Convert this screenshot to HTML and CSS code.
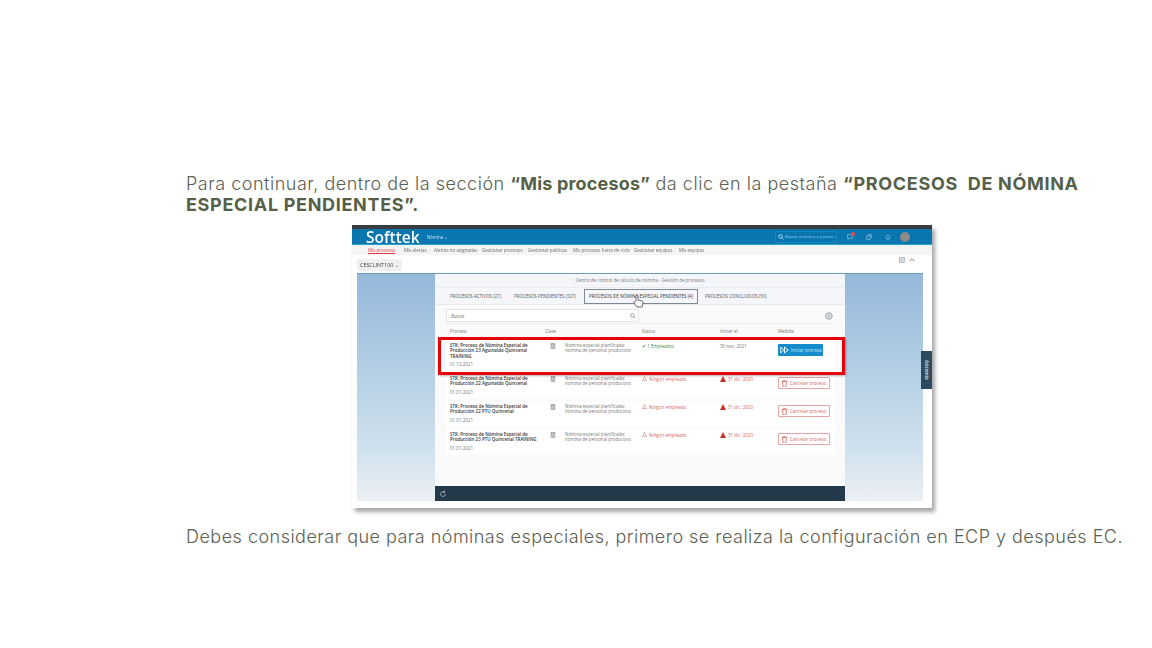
FILE: index.html
```html
<!DOCTYPE html>
<html lang="en">
<head>
    <meta charset="UTF-8">
    <meta name="viewport" content="width=device-width, initial-scale=1.0">
    <title>Mis procesos</title>
    <link rel="stylesheet" href="styles.css">
</head>
<body>

    <p class="intro">Para continuar, dentro de la sección <b class="term">“Mis procesos”</b> da clic en la pestaña <b>“PROCESOS &nbsp;DE NÓMINA ESPECIAL PENDIENTES”.</b></p>

    <div class="shot">
        <div class="topline"></div>
        <div class="shell">
            <span class="logo">Softtek</span>
            <span class="module">Nómina ⌄</span>
            <span class="search">
                <svg viewBox="0 0 10 10" width="6" height="6"><circle cx="4" cy="4" r="3" fill="none" stroke="#bfe6ff" stroke-width="1.4"/><path d="M6 6l3 3" stroke="#bfe6ff" stroke-width="1.4"/></svg>
                Buscar acciones o person...
            </span>
            <span class="shell-icon first-icon">
                <svg viewBox="0 0 10 10" width="6" height="6"><path d="M1 1h8v6H4L2 9V7H1z" fill="none" stroke="#9fd0ec"/></svg>
                <span class="badge"></span>
            </span>
            <svg class="shell-icon" viewBox="0 0 10 10" width="6" height="6"><path d="M1 3h6v6H1zM4 3V1h5v5H7" fill="none" stroke="#9fd0ec"/></svg>
            <svg class="shell-icon" viewBox="0 0 10 10" width="6" height="6"><path d="M2 8V5a3 3 0 0 1 6 0v3zM4 9h2" fill="none" stroke="#9fd0ec"/></svg>
            <span class="avatar"></span>
        </div>

        <div class="nav">
            <span class="nav-item current">Mis procesos</span>
            <span class="nav-item">Mis alertas</span>
            <span class="nav-item">Alertas no asignadas</span>
            <span class="nav-item">Gestionar procesos</span>
            <span class="nav-item">Gestionar políticas</span>
            <span class="nav-item">Mis procesos fuera de ciclo</span>
            <span class="nav-item">Gestionar equipos</span>
            <span class="nav-item">Mis equipos</span>
        </div>

        <div class="toolbar">
            <span class="client">CESCLINT100 ⌄</span>
            <span class="tool-icons">
                <svg viewBox="0 0 10 10" width="6" height="6"><rect x="1" y="1" width="8" height="8" fill="#d5d8dc" stroke="#9aa1a8"/></svg>
                <svg viewBox="0 0 10 10" width="6" height="6"><path d="M1 7l4-4 4 4" fill="none" stroke="#69717a" stroke-width="1.4"/></svg>
            </span>
        </div>

        <div class="stage">
            <div class="panel">
                <div class="panel-title">Centro de control de cálculo de nómina - Gestión de procesos</div>
                <div class="tabs">
                    <span class="tab tab-a">PROCESOS ACTIVOS (27)</span>
                    <span class="tab tab-b">PROCESOS PENDIENTES (327)</span>
                    <span class="tab tab-current">PROCESOS DE NÓMINA ESPECIAL PENDIENTES (4)</span>
                    <span class="tab tab-d">PROCESOS CONCLUIDOS (30)</span>
                </div>
                <div class="panel-body">
                    <div class="filter">
                        <div class="search-box">
                            <span>Buscar</span>
                            <svg viewBox="0 0 10 10" width="6" height="6"><circle cx="4" cy="4" r="3" fill="none" stroke="#7b8288" stroke-width="1.2"/><path d="M6 6l3 3" stroke="#7b8288" stroke-width="1.2"/></svg>
                        </div>
                        <svg class="gear" viewBox="0 0 10 10" width="8" height="8"><circle cx="5" cy="5" r="4" fill="none" stroke="#7b8288"/><circle cx="5" cy="5" r="1.6" fill="none" stroke="#7b8288" stroke-width=".8"/></svg>
                    </div>

                    <div class="row head">
                        <span>Proceso</span>
                        <span>Clase</span>
                        <span></span>
                        <span>Status</span>
                        <span>Iniciar el</span>
                        <span>Medida</span>
                    </div>

                    <div class="row first">
                        <div class="name"><b>STK: Proceso de Nómina Especial de Producción 23 Aguinaldo Quincenal TRAINING</b><span class="date">01.12.2021</span></div>
                        <svg class="doc" viewBox="0 0 10 10" width="6" height="6"><path d="M2 1h6v8H2zM2 3h6M3.5 5h3M3.5 7h3" fill="none" stroke="#666"/></svg>
                        <span class="desc">Nómina especial planificada: nómina de personal productivo</span>
                        <span class="ok">✔ 1 Empleados</span>
                        <span class="when">30 nov. 2021</span>
                        <span class="btn-start">
                            <svg viewBox="0 0 12 10" width="9" height="8"><path d="M1 1l4 4-4 4zM6 1l5 4-5 4z" fill="none" stroke="#fff" stroke-width="1.2"/></svg>
                            Iniciar proceso
                        </span>
                    </div>

                    <div class="row">
                        <div class="name"><b>STK: Proceso de Nómina Especial de Producción 22 Aguinaldo Quincenal</b><span class="date">01.01.2021</span></div>
                        <svg class="doc" viewBox="0 0 10 10" width="6" height="6"><path d="M2 1h6v8H2zM2 3h6M3.5 5h3M3.5 7h3" fill="none" stroke="#666"/></svg>
                        <span class="desc">Nómina especial planificada: nómina de personal productivo</span>
                        <span class="bad"><svg viewBox="0 0 10 10" width="5" height="5"><path d="M5 1l4 8H1z" fill="none" stroke="#d9534f"/></svg> Ningún empleado</span>
                        <span class="bad"><svg viewBox="0 0 10 10" width="6" height="6"><path d="M5 0l5 10H0z" fill="#c9302c"/></svg> 31 dic. 2020</span>
                        <span class="btn-cancel">
                            <svg viewBox="0 0 10 10" width="7" height="7"><path d="M1 2h8M3 2l.5-1h3L7 2M2 2l1 8h4l1-8" fill="none" stroke="#d9534f"/></svg>
                            Cancelar proceso
                        </span>
                    </div>

                    <div class="row">
                        <div class="name"><b>STK: Proceso de Nómina Especial de Producción 22 PTU Quincenal</b><span class="date">01.01.2021</span></div>
                        <svg class="doc" viewBox="0 0 10 10" width="6" height="6"><path d="M2 1h6v8H2zM2 3h6M3.5 5h3M3.5 7h3" fill="none" stroke="#666"/></svg>
                        <span class="desc">Nómina especial planificada: nómina de personal productivo</span>
                        <span class="bad"><svg viewBox="0 0 10 10" width="5" height="5"><path d="M5 1l4 8H1z" fill="none" stroke="#d9534f"/></svg> Ningún empleado</span>
                        <span class="bad"><svg viewBox="0 0 10 10" width="6" height="6"><path d="M5 0l5 10H0z" fill="#c9302c"/></svg> 31 dic. 2020</span>
                        <span class="btn-cancel">
                            <svg viewBox="0 0 10 10" width="7" height="7"><path d="M1 2h8M3 2l.5-1h3L7 2M2 2l1 8h4l1-8" fill="none" stroke="#d9534f"/></svg>
                            Cancelar proceso
                        </span>
                    </div>

                    <div class="row">
                        <div class="name"><b>STK: Proceso de Nómina Especial de Producción 23 PTU Quincenal TRAINING</b><span class="date">01.01.2021</span></div>
                        <svg class="doc" viewBox="0 0 10 10" width="6" height="6"><path d="M2 1h6v8H2zM2 3h6M3.5 5h3M3.5 7h3" fill="none" stroke="#666"/></svg>
                        <span class="desc">Nómina especial planificada: nómina de personal productivo</span>
                        <span class="bad"><svg viewBox="0 0 10 10" width="5" height="5"><path d="M5 1l4 8H1z" fill="none" stroke="#d9534f"/></svg> Ningún empleado</span>
                        <span class="bad"><svg viewBox="0 0 10 10" width="6" height="6"><path d="M5 0l5 10H0z" fill="#c9302c"/></svg> 31 dic. 2020</span>
                        <span class="btn-cancel">
                            <svg viewBox="0 0 10 10" width="7" height="7"><path d="M1 2h8M3 2l.5-1h3L7 2M2 2l1 8h4l1-8" fill="none" stroke="#d9534f"/></svg>
                            Cancelar proceso
                        </span>
                    </div>
                </div>
                <div class="panel-foot">
                    <svg viewBox="0 0 10 10" width="8" height="8"><path d="M8 5a3 3 0 1 1-1-2.2M7 .8v2.4H4.8" fill="none" stroke="#b8c4cc"/></svg>
                </div>
            </div>
        </div>

        <!-- things lying over the captured page -->
        <div class="redbox"></div>
        <span class="side-tab">Asistente</span>
        <svg class="hand" viewBox="0 0 12 14" width="12" height="14"><path d="M4 7V2a1 1 0 0 1 2 0v4l4 1c1 .3 1 1 1 2l-1 4H5L2 9c-.6-.8.4-1.8 1.2-1.2z" fill="#fff" stroke="#444" stroke-width=".8"/></svg>
    </div>

    <p class="outro">Debes considerar que para nóminas especiales, primero se realiza la configuración en ECP y después EC.</p>

</body>
</html>
```

FILE: styles.css
```css
body {
    font-family: Inter, "Open Sans", sans-serif;
    background-color: #fff;
    margin: 0;
    padding: 173px 0 0 186px;
    overflow: hidden;
}
.intro, .outro {
    margin: 0;
    width: 940px;
    font-size: 18px;
    letter-spacing: 0.48px;
    line-height: 21px;
    color: #5b6053;
    font-weight: 300;
}
.intro {
    letter-spacing: 0.52px;
}
.intro b {
    color: #565f47;
    font-weight: 700;
    letter-spacing: 0.68px;
}
.intro b.term {
    letter-spacing: 0.18px;
}
.outro {
    width: 950px;
    margin-top: 18px;
}

/* captured page */
.shot {
    position: relative;
    width: 580px;
    height: 283px;
    margin: 10px 0 0 166px;
    background-color: #fff;
    box-shadow: 3px 4px 4px rgba(0, 0, 0, 0.35);
    filter: blur(0.5px);
    display: flex;
    flex-direction: column;
    font-family: "Open Sans", sans-serif;
    color: #555;
    font-size: 4.5px;
}
.topline {
    height: 4px;
    background-color: #3a3d40;
}
.shell {
    height: 16px;
    background-color: #0a76b0;
    border-bottom: 1px solid #27a3c9;
    box-sizing: border-box;
    display: flex;
    align-items: center;
    padding: 0 22px 0 14px;
    color: #fff;
}
.logo {
    font-size: 15.5px;
    font-weight: 600;
    line-height: 16px;
}
.module {
    margin-left: 7px;
    color: #bfe6ff;
}
.search {
    margin-left: auto;
    width: 62px;
    height: 12px;
    display: flex;
    align-items: center;
    gap: 1px;
    white-space: nowrap;
    color: #9fd0ec;
    font-size: 4.1px;
    border: 1px solid #1486bf;
    box-sizing: border-box;
    padding-left: 2px;
}
.search svg {
    flex-shrink: 0;
}
.shell-icon {
    margin-left: 13px;
    display: flex;
    position: relative;
}
.first-icon {
    margin-left: 10px;
}
.badge {
    position: absolute;
    top: -2px;
    right: -2px;
    width: 4px;
    height: 4px;
    border-radius: 50%;
    background-color: #e8483f;
}
.avatar {
    margin-left: 9px;
    width: 10px;
    height: 10px;
    border-radius: 50%;
    background-color: #8c8c88;
}
.nav {
    height: 10px;
    background-color: #f4f4f4;
    display: grid;
    grid-template-columns: 36px 30px 48px 46px 45px 61px 45px auto;
    align-items: center;
    padding-left: 16px;
    white-space: nowrap;
    color: #6d6a7a;
}
.nav-item.current {
    color: #e0404a;
    text-decoration: underline;
}
.toolbar {
    height: 18px;
    box-sizing: border-box;
    display: flex;
    align-items: flex-start;
    justify-content: space-between;
    padding: 4px 17px 0 5px;
    background-color: #fff;
}
.client {
    width: 45px;
    height: 12px;
    box-sizing: border-box;
    background-color: #f0f0f0;
    color: #444;
    font-size: 5.4px;
    line-height: 12px;
    padding-left: 3px;
    white-space: nowrap;
}
.tool-icons {
    display: flex;
    gap: 4px;
    margin-top: -2px;
}
.stage {
    height: 228px;
    margin: 0 9px 0 5px;
    border-top: 1px solid #6f9cb8;
    box-sizing: border-box;
    padding-left: 78px;
    background: linear-gradient(180deg, #95b9dc 0%, #b6d0e5 45%, #d3e3ef 80%, #ecf0f3 100%);
}
.panel {
    width: 410px;
    height: 227px;
    background-color: #fafafa;
    display: flex;
    flex-direction: column;
}
.panel-title {
    height: 13px;
    line-height: 13px;
    text-align: center;
    background-color: #f4f6f9;
    color: #777;
    border-bottom: 1px solid #e8ebef;
}
.tabs {
    height: 16px;
    background-color: #f4f6f9;
    display: flex;
    align-items: center;
    white-space: nowrap;
    padding-left: 15px;
    color: #555;
    border-bottom: 1px solid #e8e8ee;
}
.tab-a { width: 64px; }
.tab-b { width: 70px; }
.tab-current {
    width: 114px;
    height: 15px;
    box-sizing: border-box;
    line-height: 13px;
    text-align: center;
    border: 1px solid #7d8a96;
    margin-right: 7px;
    color: #333;
}
.panel-body {
    flex: 1;
    padding: 0 10px 0 11px;
}
.filter {
    display: flex;
    align-items: center;
    justify-content: space-between;
    margin-top: 3px;
    height: 15px;
    padding-right: 2px;
    border-bottom: 1px solid #eee;
}
.search-box {
    width: 193px;
    height: 13px;
    box-sizing: border-box;
    background-color: #fff;
    border: 1px solid #e6e6e6;
    display: flex;
    align-items: center;
    justify-content: space-between;
    padding: 0 2px 0 4px;
    font-style: italic;
    color: #777;
}
.row {
    display: grid;
    grid-template-columns: 95px 20px 77px 78px 58px auto;
    padding: 3px 0 3px 4px;
    height: 26px;
    box-sizing: border-box;
    margin-bottom: 2px;
    background-color: #fff;
}
.row.head {
    height: auto;
    margin: 4px 0 3px;
    background: none;
    color: #777;
    padding: 0 0 0 4px;
}
.row.first {
    height: 35px;
    padding-top: 6px;
    margin-bottom: 1px;
}
.name b {
    display: block;
    width: 88px;
    font-weight: 600;
    color: #333;
    line-height: 5.4px;
    white-space: normal;
}
.date {
    display: block;
    margin-top: 2px;
    color: #777;
}
.doc {
    margin-left: 5px;
}
.desc {
    width: 66px;
    line-height: 5.4px;
    color: #777;
}
.ok {
    color: #4a8a4a;
}
.when {
    color: #777;
}
.bad {
    display: flex;
    align-items: flex-start;
    gap: 2px;
    color: #d9635f;
    white-space: nowrap;
}
.btn-start, .btn-cancel {
    width: 45px;
    height: 12px;
    box-sizing: border-box;
    display: flex;
    align-items: center;
    gap: 2px;
    padding-left: 2px;
    border-radius: 1px;
    white-space: nowrap;
}
.btn-start {
    background-color: #148ccc;
    color: #cfeaf8;
    margin-top: 1px;
}
.btn-cancel {
    width: 52px;
    border: 1px solid #e2a6a4;
    background-color: #fff;
    color: #d9635f;
    margin-top: 1px;
}
.panel-foot {
    height: 15px;
    background-color: #24394a;
    display: flex;
    align-items: center;
    padding-left: 4px;
}
.redbox {
    position: absolute;
    left: 86px;
    top: 112px;
    width: 407px;
    height: 38px;
    box-sizing: border-box;
    border: 3px solid #e8000b;
    box-shadow: 1px 1px 2px rgba(0, 0, 0, 0.3);
}
.side-tab {
    position: absolute;
    left: 569px;
    top: 126px;
    width: 11px;
    height: 38px;
    background-color: #2e4a5e;
    color: #dfe7ec;
    font-size: 4.4px;
    font-weight: 600;
    writing-mode: vertical-rl;
    text-align: center;
    line-height: 11px;
}
.hand {
    position: absolute;
    left: 280px;
    top: 69px;
}
```
